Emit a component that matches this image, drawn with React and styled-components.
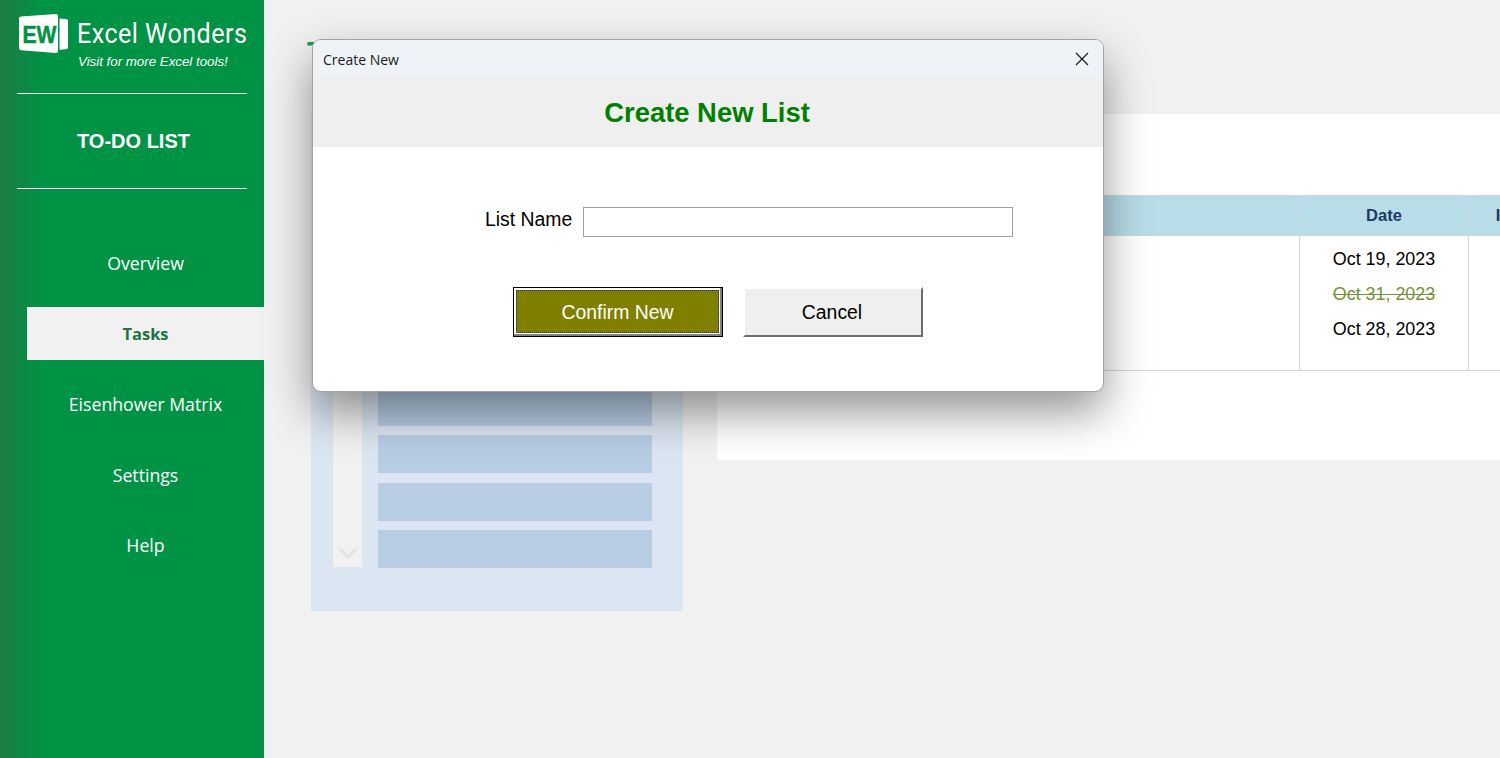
import React from 'react';
import styled, { createGlobalStyle } from 'styled-components';

const GlobalStyle = createGlobalStyle`
  html, body {
    margin: 0;
    height: 100%;
    overflow: hidden;
    background: #f1f1f1;
  }
  * {
    box-sizing: border-box;
  }
`;

const navItems = ['Overview', 'Tasks', 'Eisenhower Matrix', 'Settings', 'Help'];
const dates = [
  { label: 'Oct 19, 2023' },
  { label: 'Oct 31, 2023', done: true },
  { label: 'Oct 28, 2023' },
];

const LogoMark = () => (
  <svg width="50" height="40" viewBox="0 0 50 40">
    <path d="M3 2.5 Q1 2.7 1 4.500 L1 34 Q1 36 3 36.200 L38 39 Q40 39 40 37 L40 2 Q40 0 38 0.100 Z" fill="#fff" />
    <path d="M41.500 4.500 L48 5 Q50 5 50 7 L50 33 Q50 35 48 35.200 L41.500 35.700 Z" fill="#fff" />
    <text x="4.500" y="29" fontFamily="'Liberation Sans', sans-serif" fontWeight="700" fontSize="23" fill="#009245" stroke="#009245" strokeWidth="0.500" textLength="34" lengthAdjust="spacingAndGlyphs">EW</text>
  </svg>
);

const App = () => (
  <Page>
    <GlobalStyle />
    <Sidebar>
      <Brand>
        <LogoMark />
        <BrandName>Excel Wonders</BrandName>
      </Brand>
      <Tagline>Visit for more Excel tools!</Tagline>
      <AppTitle>TO-DO LIST</AppTitle>
      <Nav>
        {navItems.map((item) => (
          <NavItem key={item} $active={item === 'Tasks'}>{item}</NavItem>
        ))}
      </Nav>
    </Sidebar>
    <Main>
      <PageTitle>Tasks</PageTitle>
      <Content>
        <ListPanel>
          <Scrollbar>
            <svg width="20" height="12" viewBox="0 0 20 12">
              <path d="M2 2 L10 10 L18 2" fill="none" stroke="#e2e2e2" strokeWidth="3" />
            </svg>
          </Scrollbar>
          <ListRows>
            {[0, 1, 2, 3, 4, 5].map((row) => <ListRow key={row} />)}
          </ListRows>
        </ListPanel>
        <TaskCard>
          <TaskTable>
            <HeadCell />
            <HeadCell>Date</HeadCell>
            <HeadCell>Importance Level</HeadCell>
            <BodyCell />
            <BodyCell>
              {dates.map((date) => (
                <DateLine key={date.label} $done={date.done}>{date.label}</DateLine>
              ))}
            </BodyCell>
            <BodyCell />
          </TaskTable>
        </TaskCard>
      </Content>
    </Main>
    <Dialog>
      <TitleBar>
        <WindowTitle>Create New</WindowTitle>
        <svg width="14" height="14" viewBox="0 0 14 14">
          <path d="M1 1 L13 13 M13 1 L1 13" stroke="#1a1a1a" strokeWidth="1.200" fill="none" />
        </svg>
      </TitleBar>
      <DialogHeader>Create New List</DialogHeader>
      <DialogBody>
        <FieldRow>
          <FieldLabel>List Name</FieldLabel>
          <TextInput />
        </FieldRow>
        <ButtonRow>
          <ConfirmButton>
            <FocusRing>Confirm New</FocusRing>
          </ConfirmButton>
          <CancelButton>Cancel</CancelButton>
        </ButtonRow>
      </DialogBody>
    </Dialog>
  </Page>
);

const Page = styled.div`
  display: flex;
  width: 1500px;
  height: 758px;
  overflow: hidden;
  position: relative;
  background: #f1f1f1;
`;

const Sidebar = styled.aside`
  flex: 0 0 264px;
  display: flex;
  flex-direction: column;
  padding-top: 14px;
  background: linear-gradient(90deg, #1f7a44 0, #009245 40px);
  color: #fff;
`;

const Brand = styled.div`
  display: flex;
  align-items: center;
  gap: 9px;
  padding-left: 18px;
  height: 40px;
`;

const BrandName = styled.div`
  font-family: Roboto, sans-serif;
  font-size: 27px;
  line-height: 36px;
  letter-spacing: 0.500px;
  white-space: nowrap;
  transform: scaleX(0.93);
  transform-origin: left center;
`;

const Tagline = styled.div`
  font-family: 'Liberation Sans', Arial, sans-serif;
  font-size: 13.300px;
  font-style: italic;
  line-height: 16px;
  padding-left: 78px;
  height: 39px;
`;

const AppTitle = styled.div`
  margin: 0 17px;
  width: 230px;
  height: 96px;
  padding-left: 3px;
  border-top: 1px solid #fff;
  border-bottom: 1px solid #fff;
  display: flex;
  align-items: center;
  justify-content: center;
  font-family: 'Liberation Sans', Arial, sans-serif;
  font-size: 20px;
  font-weight: 700;
`;

const Nav = styled.nav`
  display: flex;
  flex-direction: column;
  gap: 17.500px;
  margin-top: 47.400px;
  padding-left: 27px;
`;

const NavItem = styled.div`
  height: 53px;
  padding-top: 1px;
  display: flex;
  align-items: center;
  justify-content: center;
  font-family: 'Open Sans', sans-serif;
  font-size: ${(props) => (props.$active ? '16.500px' : '17.700px')};
  font-weight: ${(props) => (props.$active ? 700 : 400)};
  color: ${(props) => (props.$active ? '#217346' : '#fff')};
  background: ${(props) => (props.$active ? '#f1f1f1' : 'transparent')};
`;

const Main = styled.main`
  flex: 1;
  min-width: 0;
  padding-left: 47px;
`;

const PageTitle = styled.h1`
  margin: 0 0 0 -4px;
  height: 114px;
  padding-top: 35px;
  font-family: 'Liberation Sans', Arial, sans-serif;
  font-size: 32px;
  line-height: 36px;
  font-weight: 700;
  color: #1e9e55;
`;

const Content = styled.div`
  display: flex;
  align-items: flex-start;
  gap: 34px;
`;

const ListPanel = styled.section`
  flex: 0 0 372px;
  height: 497px;
  display: flex;
  align-items: flex-end;
  padding: 16px 31px 43px 22px;
  background: #dce6f2;
`;

const Scrollbar = styled.div`
  width: 29px;
  height: 100%;
  margin-bottom: 1px;
  margin-right: 16px;
  display: flex;
  align-items: flex-end;
  justify-content: center;
  padding: 0 0 8px 1px;
  background: #f1f1f1;
`;

const ListRows = styled.div`
  flex: 1;
  display: flex;
  flex-direction: column;
  gap: 9.500px;
`;

const ListRow = styled.div`
  height: 38px;
  background: #b8cce4;
`;

const TaskCard = styled.section`
  flex: 0 0 1000px;
  height: 346px;
  padding-top: 81px;
  background: #fff;
`;

const TaskTable = styled.div`
  display: grid;
  grid-template-columns: 583px 169px 190px;
  grid-template-rows: 40px 136px;
  font-family: 'Liberation Sans', Arial, sans-serif;
`;

const HeadCell = styled.div`
  display: flex;
  align-items: center;
  justify-content: center;
  background: #b7dde8;
  border-top: 1px solid #d4d4d4;
  border-right: 1px solid #d4d4d4;
  font-size: 16.500px;
  font-weight: 700;
  color: #1f3864;
  white-space: nowrap;
`;

const BodyCell = styled.div`
  display: flex;
  flex-direction: column;
  align-items: center;
  padding-top: 6px;
  border-top: 1px solid #d4d4d4;
  border-right: 1px solid #d4d4d4;
  border-bottom: 1px solid #d4d4d4;
`;

const DateLine = styled.div`
  height: 35px;
  line-height: 35px;
  font-size: 17.900px;
  color: ${(props) => (props.$done ? '#76933c' : '#000')};
  text-decoration: ${(props) => (props.$done ? 'line-through' : 'none')};
`;

const Dialog = styled.div`
  position: absolute;
  left: 312px;
  top: 39px;
  width: 792px;
  height: 353px;
  overflow: hidden;
  display: flex;
  flex-direction: column;
  border-radius: 9px;
  border: 1px solid #a3a3a3;
  background: #fff;
  box-shadow: 0 20px 45px rgba(0, 0, 0, 0.42);
`;

const TitleBar = styled.div`
  flex: 0 0 38px;
  display: flex;
  align-items: center;
  justify-content: space-between;
  padding: 0 14px 0 10px;
  background: #eff3f8;
`;

const WindowTitle = styled.div`
  font-family: 'Open Sans', sans-serif;
  font-size: 14px;
  color: #1a1a1a;
`;

const DialogHeader = styled.div`
  flex: 0 0 69px;
  display: flex;
  align-items: center;
  justify-content: center;
  padding: 0 2px 0 0;
  background: #efefef;
  font-family: 'Liberation Sans', Arial, sans-serif;
  font-size: 27.400px;
  font-weight: 700;
  color: #008000;
`;

const DialogBody = styled.div`
  flex: 1;
  padding-top: 60px;
  font-family: 'Liberation Sans', Arial, sans-serif;
`;

const FieldRow = styled.div`
  display: flex;
  align-items: center;
  gap: 11px;
  padding-left: 172px;
`;

const FieldLabel = styled.label`
  font-size: 19.400px;
  color: #000;
  margin-top: -5px;
`;

const TextInput = styled.div`
  width: 430px;
  height: 30px;
  border: 1px solid #a0a0a0;
  background: #fff;
`;

const ButtonRow = styled.div`
  display: flex;
  gap: 20px;
  margin-top: 50px;
  padding-left: 200px;
`;

const ConfirmButton = styled.div`
  width: 210px;
  height: 50px;
  padding: 1px;
  border: 1px solid #000;
  background: #fff;
  box-shadow: inset -2px -2px 0 #808080;
  display: flex;
`;

const FocusRing = styled.div`
  flex: 1;
  margin: 1px 2px 2px 1px;
  padding-top: 1px;
  display: flex;
  align-items: center;
  justify-content: center;
  background: #808000;
  outline: 1px dotted #20206a;
  outline-offset: -1px;
  color: #fff;
  font-size: 19.400px;
`;

const CancelButton = styled.div`
  width: 180px;
  height: 50px;
  padding-right: 2px;
  display: flex;
  align-items: center;
  justify-content: center;
  background: #efefef;
  border-top: 2px solid #fff;
  border-left: 2px solid #fff;
  border-right: 2px solid #6d6d6d;
  border-bottom: 2px solid #6d6d6d;
  color: #000;
  font-size: 19.400px;
`;

export default App;
